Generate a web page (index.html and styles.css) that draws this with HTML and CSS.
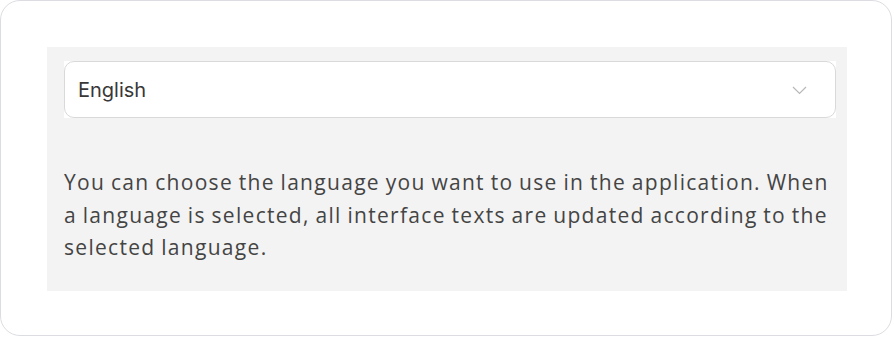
FILE: index.html
```html
<!DOCTYPE html>
<html lang="en">
<head>
    <meta charset="UTF-8">
    <title>Language</title>
    <link rel="stylesheet" href="styles.css">
</head>
<body>
    <div class="card">
        <div class="panel">
            <div class="select-wrap">
                <div class="select">
                    <span class="select-value">English</span>
                    <svg class="chevron" width="15" height="10" viewBox="0 0 15 10">
                        <path d="M1 2 L7.5 8.5 L14 2" fill="none" stroke="#b8b8b8" stroke-width="1.2"/>
                    </svg>
                </div>
            </div>
            <p class="hint">You can choose the language you want to use in the application. When a language is selected, all interface texts are updated according to the selected language.</p>
        </div>
    </div>
</body>
</html>
```

FILE: styles.css
```css
body {
    margin: 0;
    background: #ffffff;
    font-family: "Open Sans", "DejaVu Sans", sans-serif;
}
.card {
    width: 892px;
    height: 336px;
    box-sizing: border-box;
    border: 1px solid #dcdde2;
    border-radius: 20px;
    padding: 46px 44px 46px 46px;
}
.panel {
    background: #f3f3f3;
    height: 244px;
    box-sizing: border-box;
    padding: 14px 11px 0 17px;
}
.select-wrap {
    background: #ffffff;
}
.select {
    height: 57px;
    box-sizing: border-box;
    border: 1px solid #d9d9d9;
    border-radius: 10px;
    display: flex;
    align-items: center;
    justify-content: space-between;
    padding: 0 28px 0 13px;
}
.select-value {
    font-family: Inter, "Liberation Sans", sans-serif;
    font-size: 20px;
    color: #383838;
}
.hint {
    margin: 0;
    padding-top: 48px;
    font-size: 21px;
    letter-spacing: 1.3px;
    word-spacing: -1px;
    line-height: 32.5px;
    color: #444444;
    width: 782px;
}
```
